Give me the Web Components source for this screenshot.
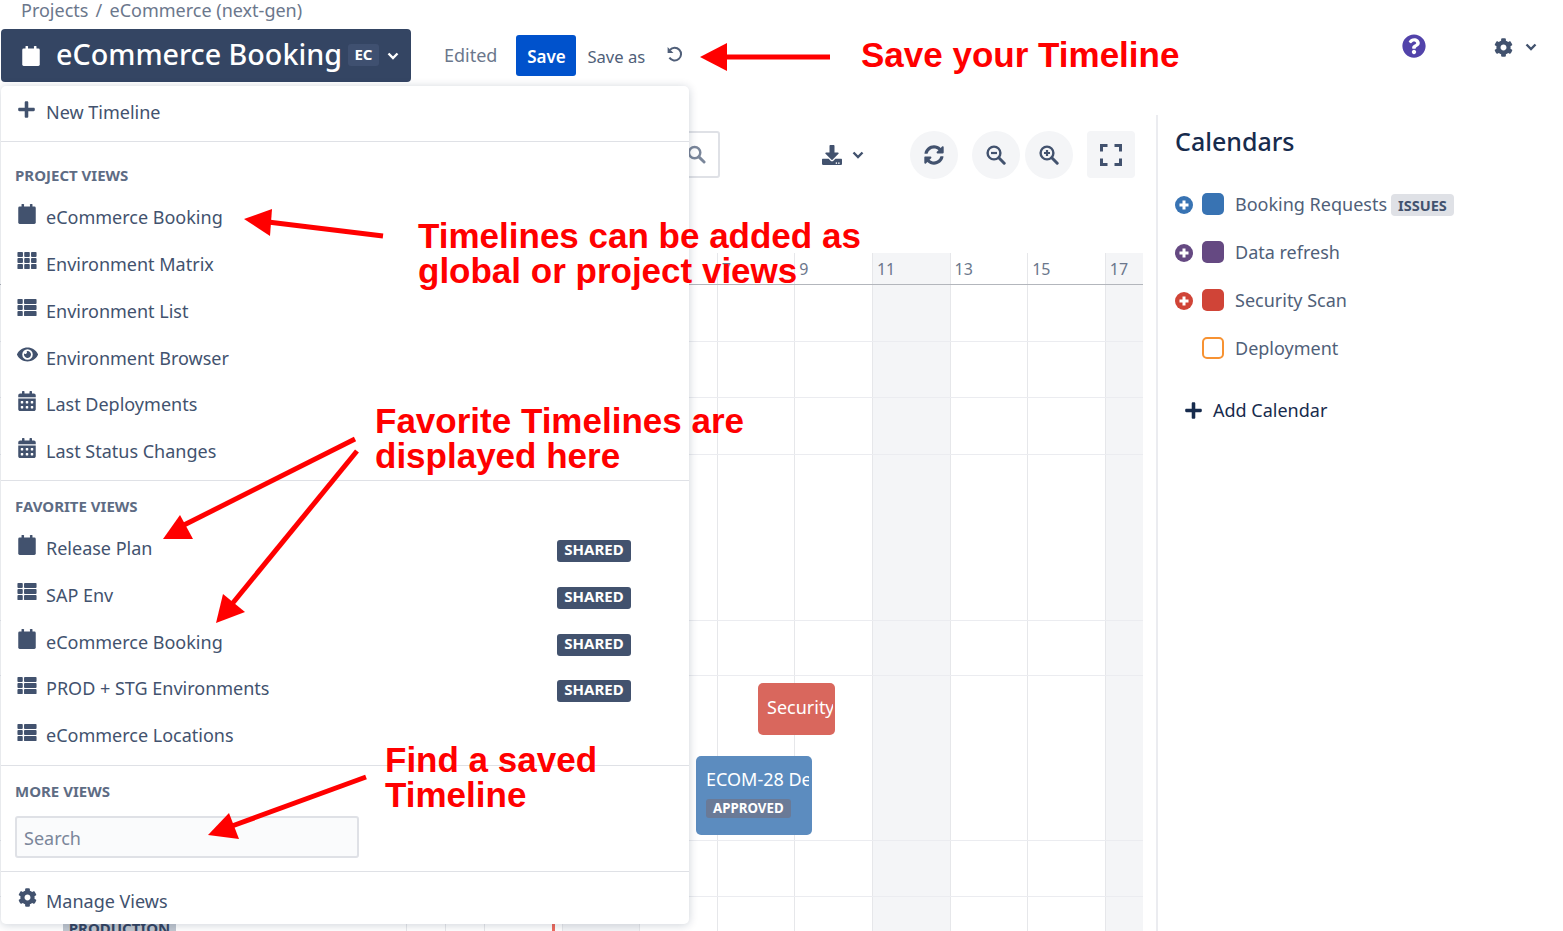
<!DOCTYPE html>
<html lang="en">
<head>
<meta charset="utf-8">
<title>eCommerce Booking</title>
<style>
  html, body { margin: 0; padding: 0; background: #fff; }
  body { font-family: "Noto Sans", "Liberation Sans", sans-serif; color: #42526e; }
</style>
</head>
<body>
<x-page>
  <x-crumbs>Projects <span style="margin:0 2.5px">/</span> eCommerce (next-gen)</x-crumbs>
  <x-topbar></x-topbar>
  <x-workspace>
    <x-timeline slot="main"></x-timeline>
    <x-calendars slot="side">
      <x-calendar-row color="#3873b3" plus>Booking Requests<x-tag slot="tag">ISSUES</x-tag></x-calendar-row>
      <x-calendar-row color="#654982" plus>Data refresh</x-calendar-row>
      <x-calendar-row color="#d04437" plus>Security Scan</x-calendar-row>
      <x-calendar-row color="#f79232" hollow>Deployment</x-calendar-row>
    </x-calendars>
  </x-workspace>

  <x-view-menu>
    <x-menu-section kind="single"><x-menu-item icon="plus">New Timeline</x-menu-item></x-menu-section>
    <x-menu-section title="PROJECT VIEWS" kind="first">
      <x-menu-item icon="calendar">eCommerce Booking</x-menu-item>
      <x-menu-item icon="th">Environment Matrix</x-menu-item>
      <x-menu-item icon="list">Environment List</x-menu-item>
      <x-menu-item icon="eye">Environment Browser</x-menu-item>
      <x-menu-item icon="calendar-alt">Last Deployments</x-menu-item>
      <x-menu-item icon="calendar-alt">Last Status Changes</x-menu-item>
    </x-menu-section>
    <x-menu-section title="FAVORITE VIEWS">
      <x-menu-item icon="calendar" shared>Release Plan</x-menu-item>
      <x-menu-item icon="list" shared>SAP Env</x-menu-item>
      <x-menu-item icon="calendar" shared>eCommerce Booking</x-menu-item>
      <x-menu-item icon="list" shared>PROD + STG Environments</x-menu-item>
      <x-menu-item icon="list">eCommerce Locations</x-menu-item>
    </x-menu-section>
    <x-menu-section title="MORE VIEWS" kind="search"><x-menu-search></x-menu-search></x-menu-section>
    <x-menu-section kind="single"><x-menu-item icon="cog">Manage Views</x-menu-item></x-menu-section>
  </x-view-menu>

  <x-notes>
    <x-note x="861" y="37">Save your Timeline</x-note>
    <x-note x="418" y="218">Timelines can be added as<br>global or project views</x-note>
    <x-note x="375" y="403">Favorite Timelines are<br>displayed here</x-note>
    <x-note x="385" y="742">Find a saved<br>Timeline</x-note>
  </x-notes>
</x-page>

<script>
const ICONS = {
  plus: ["0 0 448 512", `<path d="M416 208H272V64c0-17.67-14.33-32-32-32h-32c-17.67 0-32 14.33-32 32v144H32c-17.67 0-32 14.33-32 32v32c0 17.67 14.33 32 32 32h144v144c0 17.67 14.33 32 32 32h32c17.67 0 32-14.33 32-32V304h144c17.67 0 32-14.33 32-32v-32c0-17.67-14.33-32-32-32z"/>`],
  calendar: ["0 0 448 512", `<rect y="64" width="448" height="448" rx="36"/><rect x="84" width="64" height="110" rx="14"/><rect x="300" width="64" height="110" rx="14"/>`],
  "calendar-alt": ["0 0 448 512", `<path d="M0 464c0 26.500 21.500 48 48 48h352c26.500 0 48-21.500 48-48V192H0v272zm320-196c0-6.600 5.400-12 12-12h40c6.600 0 12 5.400 12 12v40c0 6.600-5.400 12-12 12h-40c-6.600 0-12-5.400-12-12v-40zm0 128c0-6.600 5.400-12 12-12h40c6.600 0 12 5.400 12 12v40c0 6.600-5.400 12-12 12h-40c-6.600 0-12-5.400-12-12v-40zM192 268c0-6.600 5.400-12 12-12h40c6.600 0 12 5.400 12 12v40c0 6.600-5.400 12-12 12h-40c-6.600 0-12-5.400-12-12v-40zm0 128c0-6.600 5.400-12 12-12h40c6.600 0 12 5.400 12 12v40c0 6.600-5.400 12-12 12h-40c-6.600 0-12-5.400-12-12v-40zM64 268c0-6.600 5.400-12 12-12h40c6.600 0 12 5.400 12 12v40c0 6.600-5.400 12-12 12H76c-6.600 0-12-5.400-12-12v-40zm0 128c0-6.600 5.400-12 12-12h40c6.600 0 12 5.400 12 12v40c0 6.600-5.400 12-12 12H76c-6.600 0-12-5.400-12-12v-40zM400 64h-48V16c0-8.800-7.200-16-16-16h-32c-8.800 0-16 7.200-16 16v48H160V16c0-8.800-7.200-16-16-16h-32c-8.800 0-16 7.200-16 16v48H48C21.500 64 0 85.500 0 112v48h448v-48c0-26.500-21.500-48-48-48z"/>`],
  th: ["0 0 18 16", `<rect x="0" y="0" width="5.200" height="4.600" rx=".8"/><rect x="6.400" y="0" width="5.200" height="4.600" rx=".8"/><rect x="12.800" y="0" width="5.200" height="4.600" rx=".8"/><rect x="0" y="5.700" width="5.200" height="4.600" rx=".8"/><rect x="6.400" y="5.700" width="5.200" height="4.600" rx=".8"/><rect x="12.800" y="5.700" width="5.200" height="4.600" rx=".8"/><rect x="0" y="11.400" width="5.200" height="4.600" rx=".8"/><rect x="6.400" y="11.400" width="5.200" height="4.600" rx=".8"/><rect x="12.800" y="11.400" width="5.200" height="4.600" rx=".8"/>`],
  list: ["0 0 18 16", `<rect x="0" y="0" width="5" height="4.600" rx=".8"/><rect x="6.200" y="0" width="11.800" height="4.600" rx=".8"/><rect x="0" y="5.700" width="5" height="4.600" rx=".8"/><rect x="6.200" y="5.700" width="11.800" height="4.600" rx=".8"/><rect x="0" y="11.400" width="5" height="4.600" rx=".8"/><rect x="6.200" y="11.400" width="11.800" height="4.600" rx=".8"/>`],
  eye: ["0 0 576 512", `<path d="M572.520 241.400C518.290 135.590 410.930 64 288 64S57.680 135.640 3.480 241.410a32.350 32.350 0 0 0 0 29.190C57.710 376.410 165.070 448 288 448s230.320-71.640 284.520-177.410a32.350 32.350 0 0 0 0-29.190zM288 400a144 144 0 1 1 144-144 143.930 143.930 0 0 1-144 144zm0-240a95.310 95.310 0 0 0-25.310 3.790 47.850 47.850 0 0 1-66.900 66.900A95.780 95.780 0 1 0 288 160z"/>`],
  cog: ["0 0 512 512", `<path d="M487.400 315.700l-42.600-24.600c4.300-23.200 4.300-47 0-70.200l42.600-24.600c4.900-2.800 7.100-8.600 5.500-14-11.100-35.600-30-67.800-54.700-94.600-3.800-4.100-10-5.100-14.800-2.300L380.800 110c-17.900-15.400-38.500-27.300-60.800-35.100V25.800c0-5.600-3.900-10.500-9.400-11.700-36.700-8.200-74.300-7.800-109.200 0-5.500 1.200-9.400 6.100-9.400 11.700V75c-22.200 7.900-42.800 19.800-60.800 35.100L88.700 85.500c-4.900-2.800-11-1.900-14.800 2.300-24.700 26.700-43.600 58.900-54.700 94.600-1.700 5.400.6 11.200 5.500 14L67.300 221c-4.300 23.200-4.300 47 0 70.200l-42.600 24.600c-4.900 2.800-7.100 8.600-5.500 14 11.100 35.600 30 67.800 54.700 94.600 3.800 4.100 10 5.100 14.800 2.300l42.600-24.600c17.900 15.400 38.500 27.300 60.800 35.100v49.200c0 5.600 3.900 10.500 9.400 11.700 36.700 8.200 74.300 7.800 109.200 0 5.500-1.200 9.400-6.100 9.400-11.700v-49.200c22.200-7.900 42.800-19.800 60.800-35.100l42.600 24.600c4.900 2.800 11 1.900 14.800-2.300 24.700-26.700 43.600-58.900 54.700-94.600 1.500-5.500-.7-11.300-5.600-14.100zM256 336c-44.100 0-80-35.900-80-80s35.900-80 80-80 80 35.900 80 80-35.900 80-80 80z"/>`],
  help: ["0 0 512 512", `<path d="M504 256c0 136.997-111.043 248-248 248S8 392.997 8 256C8 119.083 119.043 8 256 8s248 111.083 248 248zM262.655 90c-54.497 0-89.255 22.957-116.549 63.758-3.536 5.286-2.353 12.415 2.715 16.258l34.699 26.310c5.205 3.947 12.621 3.008 16.665-2.122 17.864-22.658 30.113-35.797 57.303-35.797 20.429 0 45.698 13.148 45.698 32.958 0 14.976-12.363 22.667-32.534 33.976C247.128 238.528 216 254.941 216 296v4c0 6.627 5.373 12 12 12h56c6.627 0 12-5.373 12-12v-1.333c0-28.462 83.186-29.647 83.186-106.667 0-58.002-60.165-102-116.531-102zM256 338c-25.365 0-46 20.635-46 46 0 25.364 20.635 46 46 46s46-20.636 46-46c0-25.365-20.635-46-46-46z"/>`],
  sync: ["0 0 512 512", `<path d="M370.720 133.280C339.458 104.008 298.888 87.962 255.848 88c-77.458.068-144.328 53.178-162.791 126.850-1.344 5.363-6.122 9.150-11.651 9.150H24.103c-7.498 0-13.194-6.807-11.807-14.176C33.933 94.924 134.813 8 256 8c66.448 0 126.791 26.136 171.315 68.685L463.030 40.970C478.149 25.851 504 36.559 504 57.941V192c0 13.255-10.745 24-24 24H345.941c-21.382 0-32.090-25.851-16.971-40.971l41.750-41.749zM32 296h134.059c21.382 0 32.090 25.851 16.971 40.971l-41.750 41.750c31.262 29.273 71.835 45.319 114.876 45.280 77.418-.07 144.315-53.144 162.787-126.849 1.344-5.363 6.122-9.150 11.651-9.150h57.304c7.498 0 13.194 6.807 11.807 14.176C478.067 417.076 377.187 504 256 504c-66.448 0-126.791-26.136-171.315-68.685L48.970 471.030C33.851 486.149 8 475.441 8 454.059V320c0-13.255 10.745-24 24-24z"/>`],
  download: ["0 0 512 512", `<path d="M216 0h80c13.300 0 24 10.700 24 24v168h87.700c17.800 0 26.700 21.500 14.100 34.100L269.700 378.300c-7.500 7.500-19.800 7.500-27.300 0L90.100 226.100c-12.600-12.600-3.700-34.100 14.100-34.100H192V24c0-13.300 10.700-24 24-24zm296 376v112c0 13.300-10.700 24-24 24H24c-13.300 0-24-10.700-24-24V376c0-13.300 10.700-24 24-24h146.700l49 49c20.100 20.100 52.500 20.100 72.600 0l49-49H488c13.300 0 24 10.700 24 24zm-124 88c0-11-9-20-20-20s-20 9-20 20 9 20 20 20 20-9 20-20zm64 0c0-11-9-20-20-20s-20 9-20 20 9 20 20 20 20-9 20-20z"/>`],
  search: ["0 0 20 20", `<circle cx="8" cy="8" r="6" fill="none" stroke="currentColor" stroke-width="2.600"/><path d="M12.500 12.500L18 18" fill="none" stroke="currentColor" stroke-width="3" stroke-linecap="round"/>`],
  "zoom-out": ["0 0 20 20", `<circle cx="8" cy="8" r="6.400" fill="none" stroke="currentColor" stroke-width="2.400"/><path d="M12.800 12.800L18.200 18.200" fill="none" stroke="currentColor" stroke-width="3" stroke-linecap="round"/><path d="M5 8h6" fill="none" stroke="currentColor" stroke-width="2.200"/>`],
  "zoom-in": ["0 0 20 20", `<circle cx="8" cy="8" r="6.400" fill="none" stroke="currentColor" stroke-width="2.400"/><path d="M12.800 12.800L18.200 18.200" fill="none" stroke="currentColor" stroke-width="3" stroke-linecap="round"/><path d="M5 8h6M8 5v6" fill="none" stroke="currentColor" stroke-width="2.200"/>`],
  expand: ["0 0 22 22", `<path d="M1.500 7.500v-6h6M14.500 1.500h6v6M20.500 14.500v6h-6M7.500 20.500h-6v-6" fill="none" stroke="currentColor" stroke-width="3"/>`],
  undo: ["0 0 16 16", `<path d="M3.700 3.600A6 6 0 1 1 3.200 11" fill="none" stroke="currentColor" stroke-width="1.900"/><path d="M1.500 1v5.500H7z"/>`],
  chevron: ["0 0 12 8", `<path d="M1.500 1.500L6 6l4.500-4.500" fill="none" stroke="currentColor" stroke-width="2.400"/>`]
};

class XIcon extends HTMLElement {
  connectedCallback() {
    const [box, body] = ICONS[this.getAttribute("name")];
    const w = this.getAttribute("w") || 18, h = this.getAttribute("h") || 18;
    this.attachShadow({ mode: "open" }).innerHTML = `
      <style>
        :host { display: inline-flex; flex: none; fill: currentColor; }
        svg { display: block; }
      </style>
      <svg width="${w}" height="${h}" viewBox="${box}">${body}</svg>`;
  }
}
customElements.define("x-icon", XIcon);

class XPage extends HTMLElement {
  constructor() {
    super();
    this.attachShadow({ mode: "open" }).innerHTML = `
      <style>
        :host { display: block; position: relative; height: 931px; overflow: hidden; }
      </style>
      <slot></slot>`;
  }
}
customElements.define("x-page", XPage);

class XCrumbs extends HTMLElement {
  constructor() {
    super();
    this.attachShadow({ mode: "open" }).innerHTML = `
      <style>
        :host { display: block; height: 29px; padding-left: 21px; box-sizing: border-box;
                font-size: 18px; line-height: 22px; color: #6b778c; white-space: nowrap; margin-top: -1px; margin-bottom: 1px; }
      </style>
      <slot></slot>`;
  }
}
customElements.define("x-crumbs", XCrumbs);

class XTopbar extends HTMLElement {
  constructor() {
    super();
    this.attachShadow({ mode: "open" }).innerHTML = `
      <style>
        :host { display: flex; align-items: center; height: 53px; padding-left: 1px; color: #6b778c; font-size: 18px; }
        .title { display: flex; align-items: center; width: 410px; height: 53px; box-sizing: border-box;
                 background: #344563; color: #fff; border-radius: 4px; padding-left: 21px; }
        .title b { font-size: 28.700px; font-weight: 500; margin-left: 16px; margin-bottom: 4px; white-space: nowrap; }
        .key { margin-left: 6px; width: 31px; height: 22px; border-radius: 3px; background: #3f5070; font-size: 15px;
               font-weight: 700; text-align: center; line-height: 20px; margin-bottom: 1px; }
        .title x-icon.c { margin-left: 8px; }
        .edited { margin-left: 33px; margin-bottom: 2px; }
        .save { margin-left: 19px; width: 60px; height: 41px; background: #0052cc; color: #fff; border-radius: 3px;
                font-weight: 600; font-size: 17px; line-height: 43px; text-align: center; }
        .as { margin-left: 11px; color: #505f79; font-size: 16.600px; padding-top: 2px; }
        .undo { margin-left: 21px; margin-bottom: 2px; color: #505f79; }
        .help { margin-left: auto; color: #5243aa; margin-bottom: 20px; position: relative; left: 1px; }
        .gear { margin-left: 69px; color: #42526e; margin-bottom: 16px; }
        .down { margin-left: 12px; margin-right: 26px; color: #42526e; margin-bottom: 18px; }
      </style>
      <div class="title">
        <x-icon name="calendar" w="18" h="20"></x-icon>
        <b>eCommerce Booking</b>
        <span class="key">EC</span>
        <x-icon class="c" name="chevron" w="12" h="8"></x-icon>
      </div>
      <span class="edited">Edited</span>
      <span class="save">Save</span>
      <span class="as">Save as</span>
      <x-icon class="undo" name="undo" w="17" h="17"></x-icon>
      <x-icon class="help" name="help" w="24" h="24"></x-icon>
      <x-icon class="gear" name="cog" w="19" h="19"></x-icon>
      <x-icon class="down" name="chevron" w="12" h="8"></x-icon>`;
  }
}
customElements.define("x-topbar", XTopbar);

class XWorkspace extends HTMLElement {
  constructor() {
    super();
    this.attachShadow({ mode: "open" }).innerHTML = `
      <style>
        :host { display: grid; grid-template-columns: 1142px 1fr; column-gap: 14px; }
      </style>
      <slot name="main"></slot>
      <slot name="side"></slot>`;
  }
}
customElements.define("x-workspace", XWorkspace);

class XTimeline extends HTMLElement {
  constructor() {
    super();
    // width, weekend flag, date label: the dates left of 7 sit under the open menu
    const cols = [[406.400], [39], [38.600], [77.600], [77.600, "w"], [77.600], [77.600, "", "7"], [77.600, "", "9"], [77.600, "w", "11"], [77.600, "", "13"], [77.600, "", "15"], [38, "w", "17"]];
    const rows = [57, 56, 57, 166, 55, 165, 56, 60];
    this.attachShadow({ mode: "open" }).innerHTML = `
      <style>
        :host { display: block; position: relative; height: 849px; }
        .tools { display: flex; align-items: center; height: 47px; margin-top: 49px; padding-left: 420px; }
        .find { width: 300px; height: 47px; box-sizing: border-box; border: 2px solid #dfe1e6; border-radius: 3px;
                display: flex; align-items: center; justify-content: flex-end; padding-right: 12px; color: #7a869a; }
        .dl { margin-left: 102px; color: #42526e; }
        .dc { margin-left: 10px; color: #42526e; }
        .round { width: 48px; height: 48px; border-radius: 50%; background: #f4f5f7; color: #42526e;
                 display: flex; align-items: center; justify-content: center; }
        .full { width: 48px; height: 47px; border-radius: 4px; background: #f4f5f7; color: #42526e;
                display: flex; align-items: center; justify-content: center; margin-left: 14px; }
        .chart { position: absolute; left: 0; top: 171px; right: 0; bottom: 0; display: grid; }
        .cols { grid-area: 1 / 1; display: flex; }
        .col { box-sizing: border-box; border-left: 1px solid #e6e7ea; font-size: 16px; color: #6b778c;
               padding: 6px 0 0 4px; line-height: 20px; }
        .col:first-child { border-left: 0; }
        .col.w { background: #f4f5f7; }
        .lines { grid-area: 1 / 1; display: flex; flex-direction: column; padding-top: 31px; }
        .head { border-top: 1px solid #b3b6bc; }
        .row { box-sizing: border-box; border-bottom: 1px solid #ebecf0; flex: none; }
        .today { position: absolute; left: 552px; top: 203px; bottom: 0; width: 3px; background: #ee6b5e; }
        .chip { position: absolute; left: 63px; top: 833px; width: 113px; height: 26px; background: #c1c7d0; color: #344563;
                font-size: 15px; font-weight: 700; line-height: 26px; text-align: center; }
        .ev { position: absolute; box-sizing: border-box; color: #fff; font-size: 18px; border-radius: 5px; overflow: hidden; white-space: nowrap; }
        .sec { left: 758px; top: 601px; width: 77px; height: 52px; background: #d9675d; padding: 11px 2px 0 9px; line-height: 26px; }
        .eco { left: 696px; top: 674px; width: 116px; height: 79px; background: #5c8cbf; padding: 10px 3px 0 10px; line-height: 26px; }
        .clip { display: block; overflow: hidden; }
        .ok { display: inline-block; margin-top: 7px; height: 19px; padding: 0 7px; border-radius: 3px; background: #6a7a97;
              font-size: 13.300px; font-weight: 700; line-height: 19px; vertical-align: top; }
      </style>
      <div class="tools">
        <div class="find"><x-icon name="search" w="19" h="19"></x-icon></div>
        <x-icon class="dl" name="download" w="20" h="20"></x-icon>
        <x-icon class="dc" name="chevron" w="12" h="8"></x-icon>
        <div class="round" style="margin-left:46px"><x-icon name="sync" w="20" h="20"></x-icon></div>
        <div class="round" style="margin-left:14px"><x-icon name="zoom-out" w="20" h="20"></x-icon></div>
        <div class="round" style="margin-left:5px"><x-icon name="zoom-in" w="20" h="20"></x-icon></div>
        <div class="full"><x-icon name="expand" w="22" h="22"></x-icon></div>
      </div>
      <div class="chart">
        <div class="cols">${cols.map(c => `<div class="col ${c[1] || ""}" style="width:${c[0]}px">${c[2] || ""}</div>`).join("")}</div>
        <div class="lines"><div class="head"></div>${rows.map(h => `<div class="row" style="height:${h}px"></div>`).join("")}</div>
      </div>
      <div class="today"></div>
      <div class="chip">PRODUCTION</div>
      <div class="ev sec"><span class="clip">Security Scan</span></div>
      <div class="ev eco"><span class="clip">ECOM-28 Deploy</span><span class="ok">APPROVED</span></div>`;
  }
}
customElements.define("x-timeline", XTimeline);

class XCalendars extends HTMLElement {
  constructor() {
    super();
    this.attachShadow({ mode: "open" }).innerHTML = `
      <style>
        :host { display: block; margin-top: 33px; height: 816px; border-left: 2px solid #ebecf0; padding-left: 17px; }
        h2 { margin: 0; padding-top: 8px; height: 65px; box-sizing: border-box; font-size: 25px; font-weight: 500; line-height: 36px; color: #172b4d; }
        .add { display: flex; align-items: center; height: 48px; margin-top: 14px; padding-left: 10px; font-size: 18px; color: #172b4d; }
        .add x-icon { margin-right: 11px; }
      </style>
      <h2>Calendars</h2>
      <slot></slot>
      <div class="add"><x-icon name="plus" w="17" h="19"></x-icon>Add Calendar</div>`;
  }
}
customElements.define("x-calendars", XCalendars);

class XCalendarRow extends HTMLElement {
  connectedCallback() {
    const color = this.getAttribute("color");
    const hollow = this.hasAttribute("hollow");
    const plus = this.hasAttribute("plus");
    this.attachShadow({ mode: "open" }).innerHTML = `
      <style>
        :host { display: flex; align-items: center; height: 48px; font-size: 18px; color: #505f79; white-space: nowrap; }
        .add { width: 18px; height: 18px; margin-right: 9px; flex: none; }
        .sw { width: 22px; height: 22px; box-sizing: border-box; border-radius: 5px; margin-right: 11px; flex: none;
              background: ${hollow ? "#fff" : color}; ${hollow ? `border: 2px solid ${color};` : ""} }
      </style>
      <div class="add">${plus ? `<svg width="18" height="18" viewBox="0 0 18 18"><circle cx="9" cy="9" r="9" fill="${color}"/><path d="M9 4.500v9M4.500 9h9" stroke="#fff" stroke-width="3"/></svg>` : ""}</div>
      <div class="sw"></div>
      <slot></slot><slot name="tag"></slot>`;
  }
}
customElements.define("x-calendar-row", XCalendarRow);

class XTag extends HTMLElement {
  constructor() {
    super();
    this.attachShadow({ mode: "open" }).innerHTML = `
      <style>
        :host { display: block; margin: 2px 0 0 4px; height: 22px; padding: 0 7px; border-radius: 4px; background: #dfe1e6; color: #42526e;
                font-size: 14.500px; font-weight: 700; line-height: 22px; }
      </style>
      <slot></slot>`;
  }
}
customElements.define("x-tag", XTag);

class XViewMenu extends HTMLElement {
  constructor() {
    super();
    this.attachShadow({ mode: "open" }).innerHTML = `
      <style>
        :host { position: absolute; left: 1px; top: 86px; width: 688px; height: 838px; background: #fff; border-radius: 5px;
                box-shadow: 0 1px 10px rgba(9, 30, 66, .2); display: flex; flex-direction: column; z-index: 2; }
      </style>
      <slot></slot>`;
  }
}
customElements.define("x-view-menu", XViewMenu);

class XMenuSection extends HTMLElement {
  connectedCallback() {
    const title = this.getAttribute("title");
    this.removeAttribute("title");
    const kind = this.getAttribute("kind") || "";
    const pad = { first: 23, "": 15, search: 15 }[kind] || 0;
    this.attachShadow({ mode: "open" }).innerHTML = `
      <style>
        :host { display: block; box-sizing: border-box; padding-bottom: 6px; border-bottom: 1px solid #dfe1e6; }
        :host([kind=first]) { padding-bottom: 5px; }
        :host([kind=single]) { padding-top: 3px; padding-bottom: 5px; }
        :host([kind=search]) { padding-bottom: 13px; }
        :host(:last-child) { border-bottom: 0; padding-bottom: 0; padding-top: 6px; }
        h3 { margin: 0; padding: ${pad}px 0 0 14px; height: 20px; font-size: 15px; font-weight: 700; line-height: 20px; color: #5e6c84; margin-bottom: 9px; }
        :host([kind=search]) h3 { margin-bottom: 15px; }
      </style>
      ${title ? `<h3>${title}</h3>` : ""}
      <slot></slot>`;
  }
}
customElements.define("x-menu-section", XMenuSection);

class XMenuItem extends HTMLElement {
  connectedCallback() {
    const icon = this.getAttribute("icon");
    const grid = icon == "th" || icon == "list";
    const w = { calendar: 18, "calendar-alt": 18, eye: 21, plus: 17, th: 20, list: 20 }[icon] || 19;
    const h = { calendar: 20, "calendar-alt": 20, th: 17, list: 17, eye: 19 }[icon] || 19;
    this.attachShadow({ mode: "open" }).innerHTML = `
      <style>
        :host { display: flex; align-items: center; height: 46.800px; padding-left: 17px; font-size: 18px; color: #42526e; white-space: nowrap; }
        .i { width: 28px; margin-bottom: 6px; flex: none; display: flex; }
        .i.g, .i.e { margin-left: -1px; width: 29px; }
        .shared { position: absolute; left: 556px; height: 22px; margin-top: 6px; border-radius: 3px; background: #42526e; color: #fff;
                  font-size: 15px; font-weight: 700; line-height: 19px; box-sizing: border-box; width: 74px; text-align: center; }
      </style>
      <span class="i ${grid ? "g" : ""} ${icon == "eye" ? "e" : ""}"><x-icon name="${icon}" w="${w}" h="${h}"></x-icon></span>
      <slot></slot>
      ${this.hasAttribute("shared") ? `<span class="shared">SHARED</span>` : ""}`;
  }
}
customElements.define("x-menu-item", XMenuItem);

class XMenuSearch extends HTMLElement {
  constructor() {
    super();
    this.attachShadow({ mode: "open" }).innerHTML = `
      <style>
        :host { display: block; margin-left: 14px; width: 344px; height: 42px; box-sizing: border-box; border: 2px solid #dfe1e6;
                border-radius: 3px; background: #fafbfc; color: #7a869a; font-size: 18px; line-height: 40px; padding-left: 7px; }
      </style>
      Search`;
  }
}
customElements.define("x-menu-search", XMenuSearch);

class XNote extends HTMLElement {
  connectedCallback() {
    this.attachShadow({ mode: "open" }).innerHTML = `
      <style>
        :host { position: absolute; left: ${this.getAttribute("x")}px; top: ${this.getAttribute("y")}px;
                font: 700 35px/35px "Liberation Sans", Arial, sans-serif; color: #f00; white-space: nowrap; }
      </style>
      <slot></slot>`;
  }
}
customElements.define("x-note", XNote);

class XNotes extends HTMLElement {
  constructor() {
    super();
    const arrows = [
      ["830,57 722,57", "700,57 727,43 727,71"],
      ["383,236 268,222", "244,219 272,209 270,236"],
      ["355,439 180,527", "163,539 180,515 193,539"],
      ["357,451 232,604", "216,623 223,594 245,612"],
      ["366,777 232,826", "208,835 229,813 239,839"]
    ];
    this.attachShadow({ mode: "open" }).innerHTML = `
      <style>
        :host { position: absolute; inset: 0; z-index: 3; }
        svg { position: absolute; left: 0; top: 0; }
      </style>
      <svg width="1563" height="931">${arrows.map(a => `<polyline points="${a[0]}" stroke="#f00" stroke-width="5" fill="none"/><polygon points="${a[1]}" fill="#f00"/>`).join("")}</svg>
      <slot></slot>`;
  }
}
customElements.define("x-notes", XNotes);
</script>
</body>
</html>
